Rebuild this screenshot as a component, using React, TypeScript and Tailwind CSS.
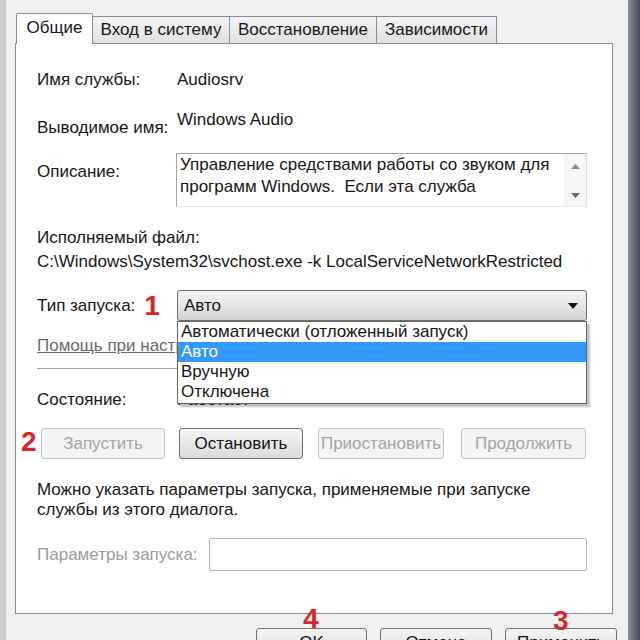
import React from "react";

function Button({
  label,
  disabled,
  className = "",
}: {
  label: string;
  disabled?: boolean;
  className?: string;
}) {
  return (
    <div
      className={`h-[31px] flex justify-center rounded-[3px] border ${
        disabled
          ? "border-[#c4c4c4] bg-[#f4f4f4] text-[#a3a3a3]"
          : "border-[#707070] bg-linear-to-b from-[#f5f5f5] to-[#dadada] text-[#111]"
      } ${className}`}
    >
      {label}
    </div>
  );
}

const Mark = ({ n, className = "" }: { n: string; className?: string }) => (
  <span
    className={`absolute font-['Liberation_Sans',sans-serif] font-bold text-[28px] leading-none text-[#d8262a] ${className}`}
  >
    {n}
  </span>
);

export default function App() {
  return (
    <div className="w-[640px] h-[640px] overflow-hidden flex bg-[#f0f0f0] text-[17px] leading-[20px] text-[#161616] font-['Liberation_Sans',Arial,sans-serif]">
      <div className="w-[6px] shrink-0 bg-[#cdcdcd]" />

      <div className="w-[622px] shrink-0 pl-[9px] pt-[13px] flex flex-col">
        {/* Tabs */}
        <div className="flex items-start h-[31px] shrink-0 pl-px">
          <div className="relative z-10 w-[77px] h-[31px] bg-white border border-b-0 border-[#898c95] rounded-t-[2px] flex items-center justify-center pb-[2px]">
            Общие
          </div>
          <div className="-ml-px mt-[3px] w-[138px] h-[27px] bg-linear-to-b from-[#f3f3f3] to-[#e1e1e1] border border-b-0 border-[#898c95] flex items-center justify-center">
            Вход в систему
          </div>
          <div className="-ml-px mt-[3px] w-[148px] h-[27px] bg-linear-to-b from-[#f3f3f3] to-[#e1e1e1] border border-b-0 border-[#898c95] flex items-center justify-center">
            Восстановление
          </div>
          <div className="-ml-px mt-[3px] w-[121px] h-[27px] bg-linear-to-b from-[#f3f3f3] to-[#e1e1e1] border border-b-0 border-[#898c95] flex items-center justify-center">
            Зависимости
          </div>
        </div>

        {/* Panel */}
        <div className="relative shrink-0 -mt-px w-[598px] h-[571px] bg-white border border-[#898c95] pl-[21px] flex flex-col">
          <div className="mt-[26px] flex h-[20px]">
            <div className="w-[140px]">Имя службы:</div>
            <div>Audiosrv</div>
          </div>

          <div className="mt-[20px] flex h-[28px]">
            <div className="w-[140px] mt-[8px]">Выводимое имя:</div>
            <div>Windows Audio</div>
          </div>

          <div className="mt-[15px] flex">
            <div className="w-[139px] mt-[9px]">Описание:</div>
            <div className="w-[411px] h-[54px] border border-[#a5a5a5] border-r-[#dcdcdc] border-b-[#e6e6e6] flex">
              <div className="flex-1 pl-[3px] leading-[22px] overflow-hidden">
                Управление средствами работы со звуком для программ Windows.&nbsp; Если эта служба
              </div>
              <div className="w-[22px] bg-[#f6f6f6] flex flex-col items-center justify-between pt-[10px] pb-[8px]">
                <svg width="9" height="5" viewBox="0 0 9 5">
                  <path d="M0 5 L4.5 0 L9 5 Z" fill="#8a8a8a" />
                </svg>
                <svg width="9" height="5" viewBox="0 0 9 5">
                  <path d="M0 0 L9 0 L4.5 5 Z" fill="#6a6a6a" />
                </svg>
              </div>
            </div>
          </div>

          <div className="mt-[21px] h-[20px]">Исполняемый файл:</div>
          <div className="mt-[4px] h-[20px] whitespace-nowrap">
            C:\Windows\System32\svchost.exe -k LocalServiceNetworkRestricted
          </div>

          <div className="mt-[18px] flex items-center h-[31px]">
            <div className="w-[140px] flex items-center">
              Тип запуска:
              <span className="ml-[9px] font-bold text-[28px] leading-none text-[#d8262a]">1</span>
            </div>
            <div className="relative w-[410px] h-[31px]">
              <div className="h-full rounded-[3px] border border-[#6f6f6f] bg-linear-to-b from-[#f3f3f3] via-[#e6e6e6] to-[#d2d2d2] flex items-center justify-between pl-[6px] pr-[8px]">
                <span>Авто</span>
                <svg width="10" height="6" viewBox="0 0 10 6">
                  <path d="M0 0 L10 0 L5 6 Z" fill="#111" />
                </svg>
              </div>
              {/* Open list */}
              <div className="absolute z-20 top-full left-0 w-[410px] h-[83px] bg-white border border-[#646464] shadow-[3px_3px_2px_rgba(0,0,0,0.25)] flex flex-col">
                <div className="h-[20px] pl-[3px]">Автоматически (отложенный запуск)</div>
                <div className="h-[20px] pl-[3px] bg-[#3399ff] text-white">Авто</div>
                <div className="h-[20px] pl-[3px]">Вручную</div>
                <div className="h-[20px] pl-[3px]">Отключена</div>
              </div>
            </div>
          </div>

          <div className="mt-[15px] h-[20px] whitespace-nowrap">
            <span className="underline text-[#6a6a6a]">Помощь при настройке параметров запуска служб.</span>
          </div>

          <div className="mt-[12px] w-[550px] border-t border-[#a0a0a0]" />

          <div className="mt-[21px] flex h-[20px]">
            <div className="w-[140px]">Состояние:</div>
            <div>Работает</div>
          </div>

          <div className="relative mt-[18px] flex">
            <Mark n="2" className="-left-[16px] top-[0px]" />
            <Button label="Запустить" disabled className="items-center ml-[4px] w-[124px]" />
            <Button label="Остановить" className="items-center ml-[14px] w-[124px]" />
            <Button label="Приостановить" disabled className="items-center ml-[15px] w-[126px]" />
            <Button label="Продолжить" disabled className="items-center ml-[17px] w-[125px]" />
          </div>

          <div className="mt-[21px] w-[540px]">
            Можно указать параметры запуска, применяемые при запуске службы из этого диалога.
          </div>

          <div className="mt-[18px] flex items-center h-[33px]">
            <div className="w-[172px] text-[#9b9b9b]">Параметры запуска:</div>
            <div className="w-[378px] h-[33px] border border-[#b5b5b5] rounded-[2px] bg-white" />
          </div>
        </div>

        {/* Dialog buttons */}
        <div className="mt-[14px] flex shrink-0">
          <div className="relative ml-[241px]">
            <Mark n="4" className="left-[47px] -top-[23px]" />
            <Button label="OK" className="items-start pt-[4px] w-[111px]" />
          </div>
          <div className="relative ml-[13px]">
            <Button label="Отмена" className="items-start pt-[4px] w-[112px]" />
          </div>
          <div className="relative ml-[13px]">
            <Mark n="3" className="left-[48px] -top-[21px] z-10" />
            <Button label="Применить" className="items-start pt-[4px] w-[112px]" />
          </div>
        </div>
      </div>

      <div className="w-[12px] shrink-0 bg-linear-to-r from-[#8d909a] to-[#474a57]" />
    </div>
  );
}
